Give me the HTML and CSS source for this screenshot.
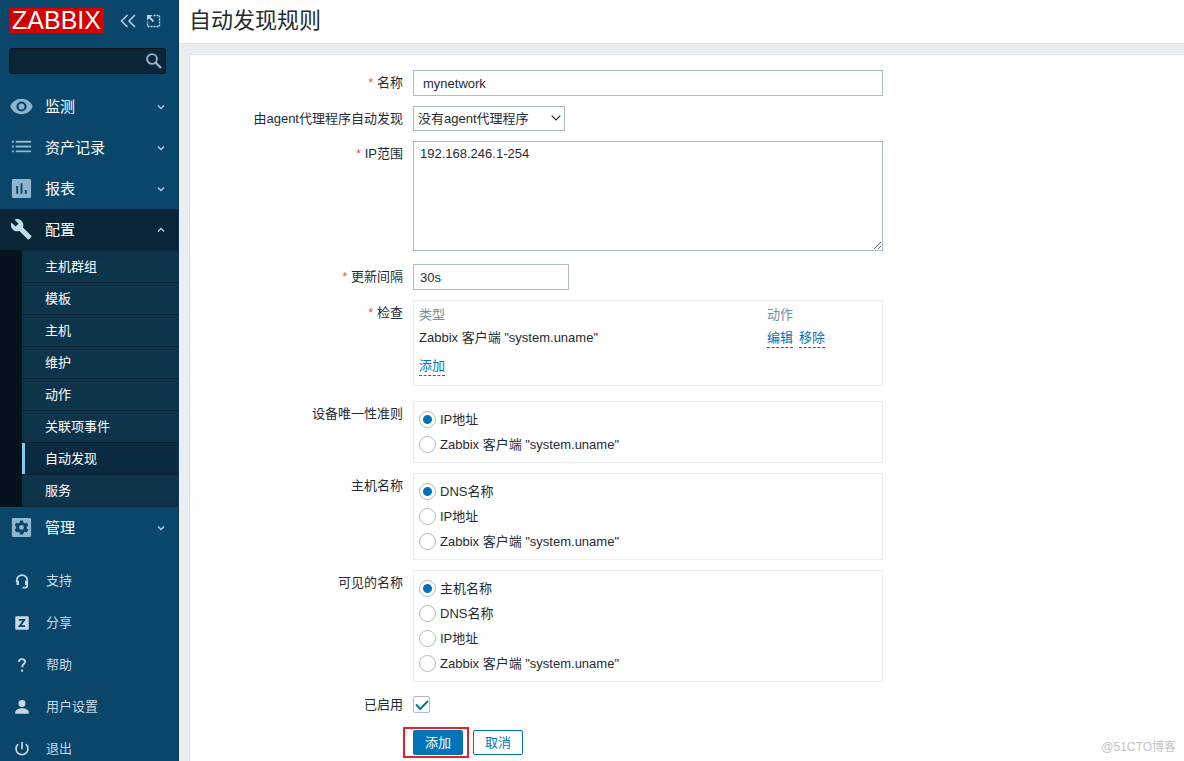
FILE: index.html
```html
<!DOCTYPE html>
<html lang="zh-CN">
<head>
<meta charset="utf-8">
<title>自动发现规则</title>
<link rel="stylesheet" href="styles.css">
</head>
<body>
<aside class="sidebar">
  <div class="brand">
    <a class="logo" href="#">ZABBIX</a>
    <button class="icon-button" type="button" aria-label="收起侧边栏">
      <svg width="16" height="16" viewBox="0 0 16 16" fill="none" stroke="currentColor" stroke-width="1.5"><path d="M7.500 2 1.500 8l6 6M15 2 9 8l6 6"/></svg>
    </button>
    <button class="icon-button" type="button" aria-label="隐藏侧边栏">
      <svg width="16" height="16" viewBox="0 0 16 16" fill="none" stroke="currentColor"><path d="M8.500 2.500h6v11h-12V8.500" stroke-width="1.400" stroke-dasharray="2 1"/><path d="M3.500 3.500l5 5" stroke-width="1.800"/><path d="M2 2h5.500L2 7.500Z" fill="currentColor" stroke="none"/></svg>
    </button>
  </div>
  <form class="search" role="search">
    <input class="search-input" type="text" aria-label="搜索">
    <button class="search-button" type="button" aria-label="搜索">
      <svg width="18" height="18" viewBox="0 0 18 18" fill="none" stroke="currentColor"><circle cx="7" cy="7" r="4.900" stroke-width="1.900"/><path d="m10.500 10.500 5.500 5.500" stroke-width="2.400"/></svg>
    </button>
  </form>
  <nav class="menu">
    <a class="menu-item" href="#">
      <svg class="menu-icon" viewBox="0 0 24 24" fill="currentColor"><path fill-rule="evenodd" d="M12 4C6.500 4 2 7.300 .3 12 2 16.700 6.500 20 12 20s10-3.300 11.700-8C22 7.300 17.500 4 12 4Zm0 13.300a5.300 5.300 0 1 1 0-10.600 5.300 5.300 0 0 1 0 10.600Zm0-2.200a3.100 3.100 0 1 0 0-6.200 3.100 3.100 0 0 0 0 6.200Z"/></svg>
      <span class="menu-text">监测</span>
      <svg class="arrow" viewBox="0 0 8 8"><path d="M1 2.500 4 5.500 7 2.500"/></svg>
    </a>
    <a class="menu-item" href="#">
      <svg class="menu-icon" viewBox="0 0 24 24" fill="currentColor"><path d="M2 5h2v2H2zm4 0h16v2H6zm-4 5h2v2H2zm4 0h16v2H6zm-4 5h2v2H2zm4 0h16v2H6z"/></svg>
      <span class="menu-text">资产记录</span>
      <svg class="arrow" viewBox="0 0 8 8"><path d="M1 2.500 4 5.500 7 2.500"/></svg>
    </a>
    <a class="menu-item" href="#">
      <svg class="menu-icon" viewBox="0 0 24 24" fill="currentColor"><path fill-rule="evenodd" d="M3.500 2h17A1.500 1.500 0 0 1 22 3.500v17a1.500 1.500 0 0 1-1.500 1.500h-17A1.500 1.500 0 0 1 2 20.500v-17A1.500 1.500 0 0 1 3.500 2ZM6.500 9.500v8h2v-8Zm4.500-3v11h2v-11Zm4.500 7v4h2v-4Z"/></svg>
      <span class="menu-text">报表</span>
      <svg class="arrow" viewBox="0 0 8 8"><path d="M1 2.500 4 5.500 7 2.500"/></svg>
    </a>
    <a class="menu-item menu-open" href="#">
      <svg class="menu-icon" viewBox="0 0 24 24" fill="currentColor"><path d="m22.200 18.500-8.700-8.700c.9-2.300.4-5-1.500-6.900-2-2-5-2.400-7.400-1.300l4.300 4.300-3 3L1.500 4.600C.4 7 .9 10 2.900 12c1.900 1.900 4.600 2.400 6.900 1.500l8.700 8.700c.4.4 1 .4 1.400 0l2.300-2.300c.4-.4.4-1 0-1.400Z"/></svg>
      <span class="menu-text">配置</span>
      <svg class="arrow" viewBox="0 0 8 8"><path d="M1 5.500 4 2.500 7 5.500"/></svg>
    </a>
    <div class="submenu">
      <a class="submenu-item" href="#">主机群组</a>
      <a class="submenu-item" href="#">模板</a>
      <a class="submenu-item" href="#">主机</a>
      <a class="submenu-item" href="#">维护</a>
      <a class="submenu-item" href="#">动作</a>
      <a class="submenu-item" href="#">关联项事件</a>
      <a class="submenu-item submenu-current" href="#" aria-current="page">自动发现</a>
      <a class="submenu-item" href="#">服务</a>
    </div>
    <a class="menu-item" href="#">
      <svg class="menu-icon" viewBox="0 0 24 24"><rect x="2" y="2" width="20" height="20" rx="1.500" fill="currentColor"/><g fill="#0a466a"><circle cx="12" cy="12" r="5.600"/><rect x="10.200" y="4.700" width="3.600" height="14.600" rx=".5"/><rect x="10.200" y="4.700" width="3.600" height="14.600" rx=".5" transform="rotate(60 12 12)"/><rect x="10.200" y="4.700" width="3.600" height="14.600" rx=".5" transform="rotate(120 12 12)"/></g><circle cx="12" cy="12" r="2.500" fill="currentColor"/></svg>
      <span class="menu-text">管理</span>
      <svg class="arrow" viewBox="0 0 8 8"><path d="M1 2.500 4 5.500 7 2.500"/></svg>
    </a>
  </nav>
  <nav class="user-menu">
    <a class="user-item" href="#">
      <svg class="user-icon" viewBox="0 0 16 16" fill="none" stroke="currentColor"><path d="M3.300 9V7.500a4.700 4.700 0 0 1 9.400 0V12c0 1.200-.8 1.900-2 1.900H8.500" stroke-width="1.500"/><path d="M4.200 7.800v3.800M11.800 7.800v3.800" stroke-width="2.200"/></svg>
      <span>支持</span>
    </a>
    <a class="user-item" href="#">
      <svg class="user-icon" viewBox="0 0 16 16"><rect x="2" y="2" width="12" height="12" rx="1" fill="currentColor"/><path d="M5.200 5.200h4.800l-4 5.600h4.800" fill="none" stroke="#0a466a" stroke-width="1.600"/></svg>
      <span>分享</span>
    </a>
    <a class="user-item" href="#">
      <svg class="user-icon" viewBox="0 0 16 16" fill="none" stroke="currentColor" stroke-width="1.700"><path d="M5.300 5.300C5.300 3.600 6.400 2.800 8 2.800s2.700.9 2.700 2.300c0 2-2.600 2.200-2.600 4.900M8.100 12v2"/></svg>
      <span>帮助</span>
    </a>
    <a class="user-item" href="#">
      <svg class="user-icon" viewBox="0 0 16 16" fill="currentColor"><circle cx="8" cy="4.900" r="3.100"/><path d="M2 14v-1.500c0-2 3.600-3.300 6-3.300s6 1.300 6 3.300V14Z"/></svg>
      <span>用户设置</span>
    </a>
    <a class="user-item" href="#">
      <svg class="user-icon" viewBox="0 0 16 16" fill="none" stroke="currentColor" stroke-width="1.500"><path d="M8 1.800v6.400M4.600 3.700a5.300 5.300 0 1 0 6.800 0"/></svg>
      <span>退出</span>
    </a>
  </nav>
</aside>
<main class="page">
  <header class="page-header"><h1 class="page-title">自动发现规则</h1></header>
  <form class="card">
    <div class="row">
      <label class="label required" for="name">名称</label>
      <input class="text-box name-box" id="name" type="text" value="mynetwork">
    </div>
    <div class="row">
      <label class="label" for="proxy">由agent代理程序自动发现</label>
      <div class="select-wrap">
        <select class="select" id="proxy"><option>没有agent代理程序</option></select>
        <svg class="select-arrow" width="10" height="6" viewBox="0 0 10 6" fill="none" stroke="#1f2c33" stroke-width="1.200"><path d="m.7.7 4.300 4.300L9.300.7"/></svg>
      </div>
    </div>
    <div class="row row-range">
      <label class="label required" for="range">IP范围</label>
      <textarea class="text-box range-box" id="range">192.168.246.1-254</textarea>
    </div>
    <div class="row">
      <label class="label required" for="delay">更新间隔</label>
      <input class="text-box delay-box" id="delay" type="text" value="30s">
    </div>
    <div class="row row-group">
      <span class="label required">检查</span>
      <div class="panel checks">
        <table class="check-table">
          <thead><tr><th class="type-col">类型</th><th>动作</th></tr></thead>
          <tbody><tr>
            <td>Zabbix 客户端 "system.uname"</td>
            <td><div class="links"><a class="link" href="#">编辑</a><a class="link" href="#">移除</a></div></td>
          </tr></tbody>
        </table>
        <a class="link" href="#">添加</a>
      </div>
    </div>
    <div class="row" role="radiogroup" aria-labelledby="unique">
      <span class="label" id="unique">设备唯一性准则</span>
      <div class="panel">
        <label class="option"><input class="radio" type="radio" name="unique" checked>IP地址</label>
        <label class="option"><input class="radio" type="radio" name="unique">Zabbix 客户端 "system.uname"</label>
      </div>
    </div>
    <div class="row" role="radiogroup" aria-labelledby="host">
      <span class="label" id="host">主机名称</span>
      <div class="panel">
        <label class="option"><input class="radio" type="radio" name="host" checked>DNS名称</label>
        <label class="option"><input class="radio" type="radio" name="host">IP地址</label>
        <label class="option"><input class="radio" type="radio" name="host">Zabbix 客户端 "system.uname"</label>
      </div>
    </div>
    <div class="row row-visible" role="radiogroup" aria-labelledby="visible">
      <span class="label" id="visible">可见的名称</span>
      <div class="panel">
        <label class="option"><input class="radio" type="radio" name="visible" checked>主机名称</label>
        <label class="option"><input class="radio" type="radio" name="visible">DNS名称</label>
        <label class="option"><input class="radio" type="radio" name="visible">IP地址</label>
        <label class="option"><input class="radio" type="radio" name="visible">Zabbix 客户端 "system.uname"</label>
      </div>
    </div>
    <div class="row row-enabled">
      <label class="label label-inline" for="enabled">已启用</label>
      <input class="checkbox" id="enabled" type="checkbox" checked>
    </div>
    <div class="row">
      <span></span>
      <div class="buttons">
        <div class="marked"><button class="button button-primary" type="button">添加</button></div>
        <button class="button" type="button">取消</button>
      </div>
    </div>
  </form>
</main>
<div class="watermark">@51CTO博客</div>
</body>
</html>
```

FILE: styles.css
```css
* { box-sizing: border-box; }

body {
  margin: 0;
  height: 100vh;
  display: flex;
  overflow: hidden;
  background: #ebeef0;
  color: #1f2c33;
  font: 13px/18px "Liberation Sans", "Noto Sans CJK SC", sans-serif;
}

a { text-decoration: none; }
button, input, select, textarea { font: inherit; color: inherit; }

/* Sidebar */
.sidebar {
  flex: 0 0 179px;
  overflow: hidden;
  background: #0a466a;
  border-right: 1px solid #083856;
}

.brand {
  display: flex;
  align-items: center;
  gap: 9px;
  padding: 8px 9px 0;
}

.logo {
  width: 95px;
  margin-right: 7px;
  background: #d40000;
  color: #fff;
  font-size: 25px;
  line-height: 25px;
  text-align: center;
}

.icon-button, .search-button {
  display: flex;
  padding: 0;
  border: 0;
  background: none;
  color: #b9d2e2;
}

.search {
  display: flex;
  align-items: center;
  height: 26px;
  margin: 15px 12px 12px 9px;
  padding-right: 2px;
  border: 1px solid #04131d;
  border-radius: 3px;
  background: #0a2636;
}

.search-input {
  flex: 1;
  min-width: 0;
  padding: 0 6px;
  border: 0;
  outline: 0;
  background: none;
  color: #fff;
}

.search-button { color: #8fb4cd; }

.menu-item {
  display: flex;
  align-items: center;
  height: 41px;
  padding: 0 13px 0 10px;
  color: #8fb5cf;
}

.menu-icon {
  width: 23px;
  height: 23px;
  margin-right: 12px;
}

.menu-text {
  flex: 1;
  color: #fff;
  font-size: 15px;
}

.arrow {
  width: 8px;
  height: 8px;
  fill: none;
  stroke: #b9d2e2;
  stroke-width: 1.3;
}

.menu-open {
  background: #0a2636;
  color: #bfdcf0;
}

.submenu {
  padding-top: 1px;
  border-left: 22px solid #04131b;
  background: #0e344c;
  box-shadow: inset 0 7px 7px -6px #0a2636, inset 0 -7px 7px -6px #0a2636;
}

.submenu-item {
  display: flex;
  align-items: center;
  height: 32px;
  padding-left: 23px;
  border-bottom: 1px solid #071f2e;
  color: #fff;
}

.submenu-item:last-child { border-bottom: 0; }

.submenu-current {
  padding-left: 20px;
  background: #0a2b3f;
  box-shadow: inset 3px 0 #86ccf2;
  padding-left: 23px;
}

.user-menu { padding-top: 12px; }

.user-item {
  display: flex;
  align-items: center;
  gap: 15px;
  height: 42px;
  padding-left: 13px;
  color: #c7d8e4;
}

.user-icon {
  width: 18px;
  height: 18px;
}

/* Page */
.page {
  flex: 1;
  min-width: 0;
  display: flex;
  flex-direction: column;
}

.page-header {
  padding: 6px 10px 7px;
  background: #fff;
  border-bottom: 1px solid #dfe4e7;
}

.page-title {
  margin: 0;
  font-size: 22px;
  font-weight: 400;
  line-height: 30px;
}

.card {
  flex: 1;
  display: flex;
  flex-direction: column;
  gap: 10px;
  margin: 10px 0 0 10px;
  padding: 15px 10px 0 0;
  border: 1px solid #dfe4e7;
  border-width: 1px 0 0 1px;
  background: #fff;
}

.row {
  display: grid;
  grid-template-columns: 213px minmax(0, 470px);
  gap: 10px;
  align-items: start;
}

.row-range { margin-bottom: 3px; }
.row-group { margin-bottom: 5px; }
.row-visible { margin-bottom: 4px; }
.row-enabled { margin-bottom: 6px; }

.label {
  padding-top: 4px;
  text-align: right;
}

.label-inline { padding-top: 0; }

.required::before {
  content: "* ";
  color: #e45959;
}

.text-box {
  width: 100%;
  height: 26px;
  padding: 0 6px;
  border: 1px solid #acbbc2;
  border-radius: 0;
  background: #fff;
}

.name-box { padding-left: 9px; }
.delay-box { width: 156px; }

.range-box {
  display: block;
  height: 110px;
  padding-top: 3px;
  resize: both;
}

.select-wrap {
  position: relative;
  width: 152px;
}

.select {
  display: block;
  width: 100%;
  height: 25px;
  padding: 0 20px 0 4px;
  border: 1px solid #acbbc2;
  border-radius: 0;
  appearance: none;
  background: #fff;
}

.select-arrow {
  position: absolute;
  top: 9px;
  right: 4px;
  pointer-events: none;
}

.panel {
  padding: 5px;
  border: 1px solid #ebeef0;
}

.checks { padding-bottom: 9px; }

.check-table {
  width: 100%;
  margin-bottom: 9px;
  border-collapse: collapse;
}

.check-table th {
  padding: 0 0 5px;
  color: #768d99;
  font-weight: 400;
  text-align: left;
}

.check-table td { padding: 0; vertical-align: top; }
.type-col { width: 76%; }
.links { display: flex; gap: 6px; }

.link {
  display: inline-block;
  border-bottom: 1px dashed #0275b8;
  color: #0275b8;
}

.option {
  display: flex;
  align-items: center;
  gap: 4px;
  height: 25px;
}

.radio, .checkbox {
  flex: none;
  width: 17px;
  height: 17px;
  margin: 0;
  border: 1px solid #acbbc2;
  appearance: none;
  background: #fff;
}

.radio { border-radius: 50%; }

.radio:checked {
  background: radial-gradient(circle, #0275b8 4px, #fff 5px);
}

.checkbox {
  display: flex;
  align-items: center;
  justify-content: center;
  border-radius: 2px;
}

.checkbox:checked::before {
  content: "";
  width: 10px;
  height: 5px;
  margin-bottom: 3px;
  border: solid #0275b8;
  border-width: 0 0 2px 2px;
  transform: rotate(-45deg);
}

.buttons { display: flex; gap: 10px; }

.button {
  display: block;
  width: 50px;
  height: 25px;
  padding: 0;
  border: 1px solid #0275b8;
  border-radius: 2px;
  background: #fff;
  color: #0275b8;
}

.button-primary { background: #0275b8; color: #fff; }

/* Highlight frame drawn over the submit button */
.marked { position: relative; }

.marked::after {
  content: "";
  position: absolute;
  inset: -3px -6px -3px -10px;
  border: 2px solid #e8202a;
  pointer-events: none;
}

.watermark {
  position: absolute;
  right: 8px;
  bottom: 5px;
  color: #c4c4c4;
  font-size: 12px;
}
```
